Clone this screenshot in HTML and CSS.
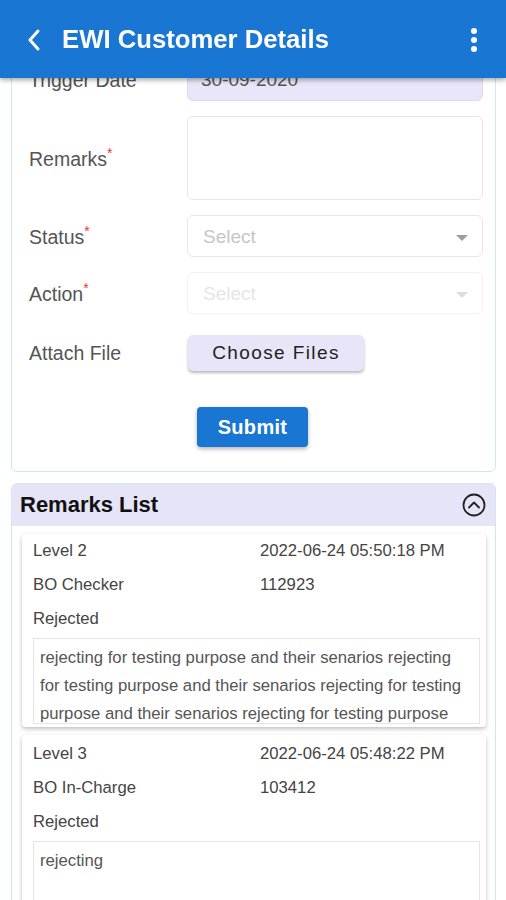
FILE: index.html
```html
<!DOCTYPE html>
<html lang="en">
<head>
    <meta charset="UTF-8">
    <meta name="viewport" content="width=device-width, initial-scale=1.0">
    <title>EWI Customer Details</title>
    <link rel="stylesheet" href="styles.css">
</head>
<body>
    <header class="app-bar">
        <button class="icon-btn back-btn" aria-label="Back">
            <svg width="16" height="24" viewBox="0 0 16 24"><path d="M12 3 L4 12 L12 21" fill="none" stroke="#fff" stroke-width="3" stroke-linecap="round" stroke-linejoin="round"/></svg>
        </button>
        <h1 class="app-title">EWI Customer Details</h1>
        <button class="icon-btn menu-btn" aria-label="More">
            <svg width="8" height="26" viewBox="0 0 8 26"><circle cx="4" cy="4" r="3" fill="#fff"/><circle cx="4" cy="13" r="3" fill="#fff"/><circle cx="4" cy="22" r="3" fill="#fff"/></svg>
        </button>
    </header>

    <main class="page">
        <section class="form-card">
            <div class="form-grid">
                <label class="field-label">Trigger Date</label>
                <div class="input input-readonly">30-09-2020</div>

                <label class="field-label">Remarks<span class="req">*</span></label>
                <div class="input textarea"></div>

                <label class="field-label">Status<span class="req">*</span></label>
                <div class="input select">
                    <span class="placeholder">Select</span>
                    <span class="caret"></span>
                </div>

                <label class="field-label">Action<span class="req">*</span></label>
                <div class="input select disabled">
                    <span class="placeholder">Select</span>
                    <span class="caret"></span>
                </div>

                <label class="field-label attach-label">Attach File</label>
                <div class="attach-cell">
                    <button class="choose-btn">Choose Files</button>
                </div>
            </div>
            <div class="submit-row">
                <button class="submit-btn">Submit</button>
            </div>
        </section>

        <section class="remarks-panel">
            <div class="panel-head">
                <h2>Remarks List</h2>
                <svg width="26" height="26" viewBox="0 0 26 26"><circle cx="13" cy="13" r="10.5" fill="none" stroke="#222" stroke-width="1.8"/><path d="M8 15.5 L13 10.5 L18 15.5" fill="none" stroke="#222" stroke-width="1.8" stroke-linecap="round" stroke-linejoin="round"/></svg>
            </div>
            <div class="panel-body">
                <div class="remark-card">
                    <div class="remark-grid">
                        <span>Level 2</span><span>2022-06-24 05:50:18 PM</span>
                        <span>BO Checker</span><span>112923</span>
                        <span>Rejected</span><span></span>
                    </div>
                    <div class="remark-text">rejecting for testing purpose and their senarios rejecting for testing purpose and their senarios rejecting for testing purpose and their senarios rejecting for testing purpose</div>
                </div>
                <div class="remark-card second">
                    <div class="remark-grid">
                        <span>Level 3</span><span>2022-06-24 05:48:22 PM</span>
                        <span>BO In-Charge</span><span>103412</span>
                        <span>Rejected</span><span></span>
                    </div>
                    <div class="remark-text">rejecting</div>
                </div>
            </div>
        </section>
    </main>
</body>
</html>
```

FILE: styles.css
```css
* {
    box-sizing: border-box;
}

html, body {
    margin: 0;
    padding: 0;
    width: 100%;
    height: 100vh;
    overflow: hidden;
    background-color: #fff;
    font-family: 'Liberation Sans', Arial, sans-serif;
}

.app-bar {
    position: fixed;
    top: 0;
    left: 0;
    right: 0;
    z-index: 10;
    height: 78px;
    display: flex;
    align-items: center;
    background-color: #1976d2;
    box-shadow: 0 2px 5px rgba(0, 0, 0, 0.35);
    color: #fff;
}

.icon-btn {
    background: none;
    border: none;
    padding: 0;
    display: flex;
    align-items: center;
    cursor: pointer;
}

.back-btn {
    margin-left: 26px;
    margin-top: 2px;
}

.app-title {
    margin: 0 0 0 20px;
    font-size: 25.7px;
    font-weight: 700;
    flex: 1;
}

.menu-btn {
    margin-right: 28px;
    margin-top: 2px;
}

.page {
    padding: 44px 10px 0 11px;
}

.form-card {
    border: 1px solid #cfe6ee;
    border-radius: 6px;
    padding: 14px 12px 24px 17px;
}

.form-grid {
    display: grid;
    grid-template-columns: 158px 1fr;
    grid-template-rows: 42px 84px 42px 42px 42px;
    row-gap: 15px;
    align-items: center;
}

.field-label {
    font-size: 19.5px;
    color: #555;
}

.req {
    color: #e53935;
    font-size: 14px;
    vertical-align: 8px;
}

.input {
    height: 100%;
    border: 1px solid #e6e6e6;
    border-radius: 6px;
    font-size: 19px;
    color: #555;
    display: flex;
    align-items: center;
    padding: 0 13px;
}

.input-readonly {
    background-color: #e8e6f8;
    border-color: #dcdaee;
}

.select {
    justify-content: space-between;
    padding: 1px 14px 0 15px;
}

.placeholder {
    color: #c6c6c6;
}

.caret {
    width: 0;
    height: 0;
    border-left: 6px solid transparent;
    border-right: 6px solid transparent;
    border-top: 6px solid #9e9e9e;
    margin-top: 2px;
}

.select.disabled {
    border-color: #f2f2f2;
}

.select.disabled .placeholder {
    color: #e6e6e6;
}

.select.disabled .caret {
    border-top-color: #dcdcdc;
}

.attach-label,
.attach-cell {
    margin-top: 6px;
}

.attach-cell {
    padding-left: 1px;
}

.choose-btn {
    width: 176px;
    height: 36px;
    background-color: #e7e5f7;
    border: none;
    border-radius: 5px;
    font-family: 'Liberation Sans', Arial, sans-serif;
    font-size: 19px;
    letter-spacing: 1.4px;
    color: #222;
    box-shadow: 0 2px 3px rgba(0, 0, 0, 0.28);
    cursor: pointer;
}

.submit-row {
    display: flex;
    justify-content: center;
    margin-top: 36px;
}

.submit-btn {
    width: 111px;
    height: 40px;
    margin-right: 7px;
    background-color: #1976d2;
    border: none;
    border-radius: 4px;
    font-family: 'Liberation Sans', Arial, sans-serif;
    font-size: 20px;
    font-weight: 700;
    letter-spacing: 0.3px;
    color: #fff;
    box-shadow: 0 2px 4px rgba(0, 0, 0, 0.3);
    cursor: pointer;
}

.remarks-panel {
    margin-top: 11px;
    border: 1px solid #cfe6ee;
    border-radius: 6px;
}

.panel-head {
    height: 42px;
    display: flex;
    align-items: center;
    justify-content: space-between;
    padding: 0 8px 0 8px;
    background-color: #e6e4f7;
    border-radius: 5px 5px 0 0;
}

.panel-head h2 {
    margin: 0;
    font-size: 22px;
    font-weight: 700;
    color: #111;
}

.panel-body {
    padding: 8px 9px 0 10px;
    display: flex;
    flex-direction: column;
    gap: 8px;
}

.remark-card {
    background-color: #fff;
    border-radius: 4px;
    box-shadow: 0 2px 4px rgba(0, 0, 0, 0.25);
    padding: 0 6px 3px 11px;
}

.remark-card.second {
    padding-top: 2px;
}

.remark-grid {
    display: grid;
    grid-template-columns: 227px 1fr;
    grid-auto-rows: 34px;
    align-items: center;
    font-size: 16.7px;
    color: #444;
}

.remark-text {
    margin-top: 2px;
    height: 86px;
    overflow: hidden;
    border: 1px solid #e4e4e4;
    padding: 5px 6px;
    font-size: 16.7px;
    line-height: 28px;
    color: #555;
}
```
